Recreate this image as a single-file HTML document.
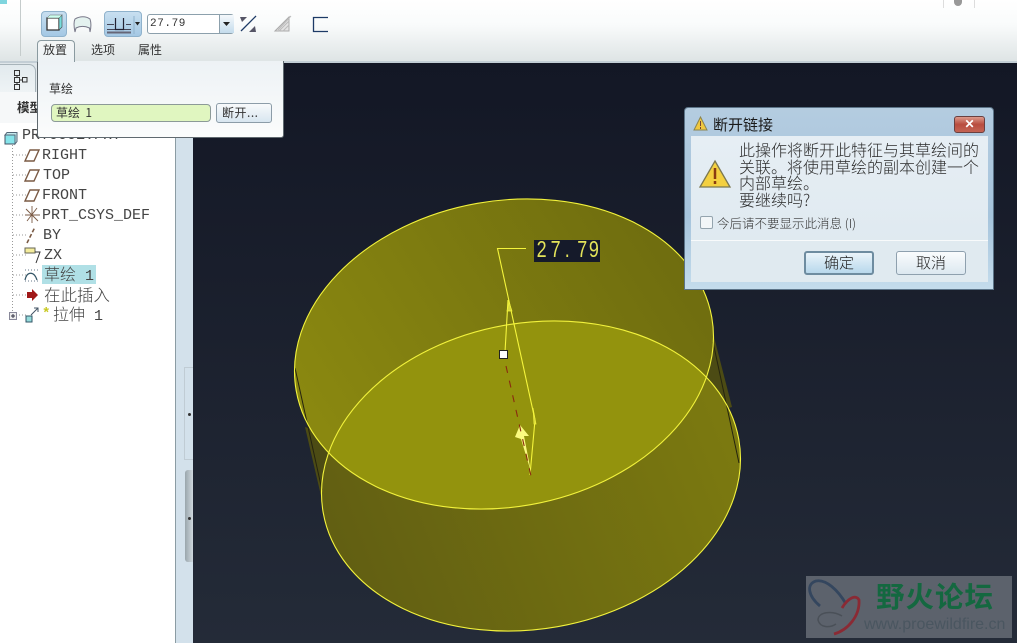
<!DOCTYPE html>
<html><head><meta charset="utf-8">
<style>
html,body{margin:0;padding:0;background:#1a1f2e}
#r{position:relative;width:1017px;height:643px;overflow:hidden;font-family:"Liberation Sans","Noto Sans CJK SC",sans-serif;color:#222}
.a{position:absolute;white-space:nowrap}
.t{position:absolute;white-space:nowrap;font:15px/18px "Liberation Mono","Noto Sans CJK SC",monospace;color:#444}
.z{font-family:"Noto Sans CJK SC","WenQuanYi Zen Hei",sans-serif;font-weight:300}
.s{position:absolute;font:12px/14px "Noto Sans CJK SC",sans-serif;color:#333;white-space:nowrap}
</style></head><body><div id="r">

<svg class="a" style="left:0;top:0" width="1017" height="643" viewBox="0 0 1017 643">
<defs>
<linearGradient id="bg" x1="0" y1="0" x2="0" y2="1"><stop offset="0" stop-color="#131725"/><stop offset="1" stop-color="#242b38"/></linearGradient>
<linearGradient id="top" gradientUnits="userSpaceOnUse" x1="320" y1="420" x2="700" y2="260"><stop offset="0" stop-color="#8a8810"/><stop offset="1" stop-color="#6e6c0f"/></linearGradient>
<linearGradient id="bot" gradientUnits="userSpaceOnUse" x1="340" y1="560" x2="730" y2="480"><stop offset="0" stop-color="#625f12"/><stop offset="1" stop-color="#7b7910"/></linearGradient>
<clipPath id="cb"><ellipse cx="531" cy="476" rx="211" ry="153" transform="rotate(-10 531 476)"/></clipPath>
</defs>
<rect x="193" y="62" width="824" height="581" fill="url(#bg)"/>
<!-- side walls -->
<path d="M305 427 L322 500 L340 470 L315 430Z" fill="#4c4b14"/>
<path d="M713 333 L732 407 L722 410 L700 375Z" fill="#4c4b14"/>
<ellipse cx="531" cy="476" rx="211" ry="153" transform="rotate(-10 531 476)" fill="url(#bot)"/>
<ellipse cx="504" cy="354" rx="211" ry="153" transform="rotate(-10 504 354)" fill="url(#top)"/>
<g clip-path="url(#cb)"><ellipse cx="504" cy="354" rx="211" ry="153" transform="rotate(-10 504 354)" fill="#93930d"/></g>
<path d="M295 368 L322 490M713 342 L739 463" stroke="#25240f" stroke-width="1" fill="none"/>
<ellipse cx="531" cy="476" rx="211" ry="153" transform="rotate(-10 531 476)" fill="none" stroke="#f2f23c" stroke-width="1.100"/>
<ellipse cx="504" cy="354" rx="211" ry="153" transform="rotate(-10 504 354)" fill="none" stroke="#f2f23c" stroke-width="1.100"/>
<!-- dimension -->
<path d="M526 248.500 H497.500 L535 420 L530 475 M508 300 L505 352" fill="none" stroke="#f5f53c" stroke-width="1.100"/>
<path d="M509 302 L512 311 L507 311Z M533 408 L536 424 L534 424Z" fill="#d8d83a" stroke="#f5f53c" stroke-width=".7"/>
<path d="M520 425 L529 436 L524 436 L531 472 L521 439 L515 437Z" fill="#fbfb80"/>
<path d="M506 366 L531 476" stroke="#8a2a10" stroke-width="1.100" stroke-dasharray="7 8" fill="none"/>
<rect x="499.500" y="350.500" width="8" height="8" fill="#fff" stroke="#222"/>
<rect x="534" y="240" width="66" height="22" fill="#151a2a"/>
<text transform="translate(0,257) scale(.78,1)" y="0" x="688 706 724 740 755" font-family="Liberation Sans,sans-serif" font-size="23" fill="#e4e45a">27.79</text>
</svg>

<!-- top toolbar -->
<div class="a" style="left:0;top:0;width:1017px;height:63px;background:linear-gradient(#fff 0,#f9fbfb 25px,#dfe5e6 60px);border-bottom:2px solid #c3ced5;box-sizing:border-box"></div>
<div class="a" style="left:20px;top:0;width:1px;height:56px;background:#c5cccc"></div>
<div class="a" style="left:0;top:0;width:7px;height:4px;background:#7fd5de"></div>
<div class="a" style="left:943px;top:0;width:30px;height:8px;border-left:1px solid #ddd;border-right:1px solid #ddd"></div>
<div class="a" style="left:954px;top:0;width:8px;height:6px;border-radius:0 0 4px 4px;background:#999"></div>

<div class="a" style="left:41px;top:11px;width:26px;height:26px;border-radius:4px;background:linear-gradient(#c8dff0,#a4c8e4);border:1px solid #8fb2cc;box-sizing:border-box"></div>
<svg class="a" style="left:44px;top:12px" width="24" height="24"><path d="M3 6H15V18H3Z" fill="#fff" stroke="#333" stroke-width="1.300"/><path d="M15 6L18 3V15L15 18Z" fill="#7dd" stroke="#444" stroke-width=".6"/><path d="M3 6L6 3H18L15 6Z" fill="#cfe" stroke="#666" stroke-width=".5"/></svg>
<svg class="a" style="left:72px;top:15px" width="22" height="20"><path d="M3 17C1.500 10 2 6 3 4 8 1 14 1 18 4 19 7 19.500 11 18 17 L17.500 13C13 11 8 11 4 13Z" fill="#e4f2ef" stroke="#778" stroke-width="1"/></svg>

<div class="a" style="left:104px;top:11px;width:38px;height:26px;border-radius:4px;background:linear-gradient(#c8dff0,#a4c8e4);border:1px solid #8fb2cc;box-sizing:border-box"></div>
<svg class="a" style="left:105px;top:12px" width="38" height="24"><path d="M2 12.500H9M21 12.500H26M2 17.500H26" stroke="#445" fill="none"/><path d="M2 20.500H26" stroke="#667" stroke-width="2"/><path d="M10.500 6V17.500H18.500V6" stroke="#223" stroke-width="1.200" fill="none"/><path d="M29 4V22" stroke="#8fb2cc"/><path d="M30 10H35L32.500 13.500Z" fill="#222"/></svg>

<div class="a" style="left:147px;top:14px;width:87px;height:20px;border:1px solid #8ca0ac;border-radius:3px;background:#fff;box-sizing:border-box"></div>
<div class="a" style="left:219px;top:15px;width:14px;height:18px;background:linear-gradient(#f4f8fb,#c4dcec);border-left:1px solid #8ca0ac"></div>
<svg class="a" style="left:222px;top:21px" width="9" height="6"><path d="M1 1H8L4.500 5Z" fill="#222"/></svg>
<div class="a" style="left:150px;top:16px;font:11px/16px 'Liberation Mono',monospace;color:#333;letter-spacing:.6px">27.79</div>

<svg class="a" style="left:238px;top:13px" width="20" height="22"><path d="M3 18L18 3" stroke="#1d3a66" stroke-width="1.300"/><path d="M2 4L9 4 4 9Z M18 19L11 19 17 13Z" fill="#556"/></svg>
<svg class="a" style="left:273px;top:13px" width="22" height="22"><path d="M2 18L16 4V18Z" fill="#e4e4e4" stroke="#aaa"/><path d="M6 18L16 8M10 18L16 12" stroke="#bbb"/><path d="M18 3L5 17" stroke="#bbb"/></svg>
<svg class="a" style="left:312px;top:16px" width="18" height="17"><path d="M16 1.500H1.500V15.500H16" fill="none" stroke="#1d3a66" stroke-width="1.300"/></svg>

<!-- left panel -->
<div class="a" style="left:0;top:63px;width:193px;height:580px;background:#d3e1eb"></div>
<div class="a" style="left:0;top:63px;width:175px;height:580px;background:#fff;border-right:1px solid #8b9ca3"></div>
<div class="a" style="left:0;top:63px;width:175px;height:29px;background:#dfe6ea"></div>
<div class="a" style="left:0;top:64px;width:36px;height:28px;background:linear-gradient(#e2eaee,#eef3f5);border:1px solid #a8b4ba;border-left:0;border-bottom:0;border-radius:0 7px 0 0;box-sizing:border-box"></div>
<svg class="a" style="left:12px;top:69px" width="18" height="22"><path d="M2.500 1.500H7.500V6.500H2.500ZM2.500 8.500H7.500V13.500H2.500ZM2.500 15.500H7.500V20.500H2.500ZM10.500 8.500H15V13H10.500ZM5 6.500V8.500M5 13.500V15.500M7.500 11H10.500" fill="none" stroke="#333"/></svg>
<div class="a" style="left:0;top:92px;width:175px;height:31px;background:#f6f8f9"></div>
<div class="a z" style="left:17px;top:98px;font-size:12.500px;line-height:18px;font-weight:700;color:#333">模型</div>
<div class="a" style="left:0;top:123px;width:175px;height:520px;background:#fff;border-radius:7px 0 0 0"></div>

<!-- tree lines -->
<svg class="a" style="left:0;top:130px" width="60" height="200"><path d="M12.500 12V182M13 25H26M13 45H26M13 65H26M13 85H26M13 105H26M13 125H26M13 145H26M13 165H26M16 185H26" stroke="#999" stroke-dasharray="1 2" fill="none"/>
<rect x="9.500" y="182.500" width="7" height="7" fill="#eee" stroke="#889"/><path d="M11 186H15M13 184V188" stroke="#334"/>
<path d="M5 5H15V14H5Z" fill="#86e4ea" stroke="#456"/><path d="M5 5L7 2.500H17V11.500L15 14V5Z" fill="#c4eaee" stroke="#567"/>
<g fill="none" stroke="#7a5a44" stroke-width="1.400"><path d="M25 31L30 20H39L34 31Z"/><path d="M25 51L30 40H39L34 51Z"/><path d="M25 71L30 60H39L34 71Z"/>
<path d="M26 79L38 91M37 78L27 91M32 76V93M25 85H40" stroke-width=".9"/>
<path d="M27 113L35 97" stroke-dasharray="4 2" stroke-width="1.600"/></g>
<path d="M25 118H35V123H25Z" fill="#f4ec9c" stroke="#665"/><path d="M35 122H40L36 133" fill="none" stroke="#333"/>
<path d="M25 150C27 141 34 141 37 150" fill="none" stroke="#356" stroke-width="1.200"/><path d="M25 140H38M25 151H38" stroke="#678" stroke-dasharray="1 2"/>
<path d="M27 162H32V159L38 165L32 171V168H27Z" fill="#a01818"/>
<path d="M26 186H32V192H26Z" fill="#96dcdc" stroke="#356"/><path d="M31 185L38 178M34 178H38V182" fill="none" stroke="#456"/>
</svg>
<div class="a" style="left:42px;top:306px;font:14px/16px 'Liberation Mono',monospace;color:#c8c820;font-weight:700">*</div>
<div class="t" style="left:22px;top:127px">PRT0001.PRT</div>
<div class="t" style="left:42px;top:147px">RIGHT</div>
<div class="t" style="left:43px;top:167px">TOP</div>
<div class="t" style="left:42px;top:187px">FRONT</div>
<div class="t" style="left:42px;top:207px">PRT_CSYS_DEF</div>
<div class="t" style="left:43px;top:227px">BY</div>
<div class="t" style="left:44px;top:247px">ZX</div>
<div class="a" style="left:42px;top:265px;width:54px;height:19px;background:#b0e0e6"></div>
<div class="t" style="left:44px;top:264px"><span class="z" style="font-size:16px">草绘</span>&nbsp;1</div>
<div class="t z" style="left:44px;top:285px;font-size:16.500px">在此插入</div>
<div class="t" style="left:53px;top:304px"><span class="z" style="font-size:16px">拉伸</span>&nbsp;1</div>

<!-- splitter -->
<div class="a" style="left:184px;top:367px;width:9px;height:93px;border:1px solid #c0ccd4;border-right:0;box-sizing:border-box"></div>
<div class="a" style="left:185px;top:470px;width:8px;height:92px;background:linear-gradient(90deg,#9aa6ac,#cfd8de);border-radius:3px 0 0 3px"></div>
<div class="a" style="left:188px;top:413px;width:3px;height:3px;background:#333;border-radius:50%"></div>
<div class="a" style="left:188px;top:517px;width:3px;height:3px;background:#333;border-radius:50%"></div>

<!-- placement panel -->
<div class="a" style="left:37px;top:61px;width:247px;height:77px;background:linear-gradient(#edf2f5,#fbfcfc);border:1px solid #606a70;border-top:0;border-radius:0 0 3px 3px;box-sizing:border-box"></div>
<div class="a" style="left:37px;top:40px;width:38px;height:22px;background:linear-gradient(#f4f6f6,#edf2f5);border:1px solid #8a9aa0;border-bottom:0;border-radius:4px 4px 0 0;box-sizing:border-box"></div>
<div class="s" style="left:43px;top:43px">放置</div>
<div class="s" style="left:91px;top:43px">选项</div>
<div class="s" style="left:138px;top:43px">属性</div>
<div class="s" style="left:49px;top:82px">草绘</div>
<div class="a" style="left:51px;top:104px;width:160px;height:18px;background:#e0f6c0;border:1px solid #8c9a98;border-radius:4px;box-sizing:border-box"></div>
<div class="s" style="left:56px;top:106px">草绘&nbsp;&nbsp;1</div>
<div class="a" style="left:216px;top:103px;width:56px;height:20px;background:linear-gradient(#f8fafb,#d8e6f0);border:1px solid #8c9ca8;border-radius:3px;box-sizing:border-box"></div>
<div class="s" style="left:222px;top:106px;letter-spacing:.5px">断开...</div>

<!-- dialog -->
<div class="a" style="left:684px;top:107px;width:310px;height:183px;background:linear-gradient(#b4cce0,#a6c4dc 60%,#c4dcec);border:1px solid #5c7488;border-radius:4px 4px 0 0;box-sizing:border-box"></div>
<div class="a" style="left:691px;top:136px;width:297px;height:146px;background:linear-gradient(#e6eef4,#dde8ef);"></div>
<div class="a" style="left:691px;top:240px;width:297px;height:42px;background:#e0eaf0;border-top:1px solid #f8fafb;box-sizing:border-box"></div>
<svg class="a" style="left:692px;top:115px" width="18" height="18"><path d="M8.500 2L15 15H2Z" fill="#f0c840" stroke="#8a8450"/><path d="M8.500 6V11M8.500 12V14" stroke="#743"/></svg>
<div class="a z" style="left:713px;top:115px;font-size:15px;line-height:20px;color:#1a1a1a;font-weight:400">断开链接</div>
<div class="a" style="left:954px;top:116px;width:31px;height:17px;background:linear-gradient(#dc9a8c,#b84c3e 50%,#c46454);border:1px solid #6a4040;border-radius:3px;box-sizing:border-box;color:#fff;font:bold 12px/14px 'Liberation Sans',sans-serif;text-align:center">✕</div>
<svg class="a" style="left:698px;top:159px" width="34" height="30"><path d="M17 2L32 28H2Z" fill="#f4d040" stroke="#7c7850" stroke-width="1.300"/><path d="M17 9V20M17 22V25" stroke="#8a3c10" stroke-width="2.500"/></svg>
<div class="a z" style="left:739px;top:141px;font-size:16px;line-height:16.500px;color:#2a2a2a">此操作将断开此特征与其草绘间的<br>关联。将使用草绘的副本创建一个<br>内部草绘。<br>要继续吗?</div>
<div class="a" style="left:700px;top:216px;width:13px;height:13px;background:#f2f6f8;border:1px solid #94a4ae;border-radius:2px;box-sizing:border-box"></div>
<div class="a z" style="left:717px;top:214px;font-size:12.500px;line-height:17px;color:#333">今后请不要显示此消息 (I)</div>
<div class="a z" style="left:804px;top:251px;width:70px;height:24px;background:linear-gradient(#eaf4fa,#b8d8ec);border:2px solid #6e8ca0;border-radius:3px;box-sizing:border-box;text-align:center;font-size:15px;line-height:20px;color:#222">确定</div>
<div class="a z" style="left:896px;top:251px;width:70px;height:24px;background:linear-gradient(#fafcfd,#dce8f0);border:1px solid #8ea0ae;border-radius:3px;box-sizing:border-box;text-align:center;font-size:15px;line-height:22px;color:#222">取消</div>

<!-- watermark -->
<div class="a" style="left:806px;top:576px;width:206px;height:62px;background:#5c626c"></div>
<svg class="a" style="left:806px;top:576px" width="60" height="62"><path d="M14 30C2 20 0 8 10 5 20 3 32 14 40 28" fill="none" stroke="#34465e" stroke-width="2.800"/><path d="M28 58C42 54 54 40 53 24 50 18 42 22 36 32" fill="none" stroke="#8a2a34" stroke-width="2.800"/><path d="M36 40C26 34 12 36 12 44 14 52 24 52 30 48" fill="none" stroke="#4a5058" stroke-width="1.500"/></svg>
<div class="a" style="left:876px;top:578px;font:700 28.500px/36px 'Noto Sans CJK SC',sans-serif;color:#146840;letter-spacing:1px">野火论坛</div>
<div class="a" style="left:864px;top:615px;font:16px/20px 'Liberation Sans',sans-serif;color:#4a5660">www.proewildfire.cn</div>
</div></body></html>
